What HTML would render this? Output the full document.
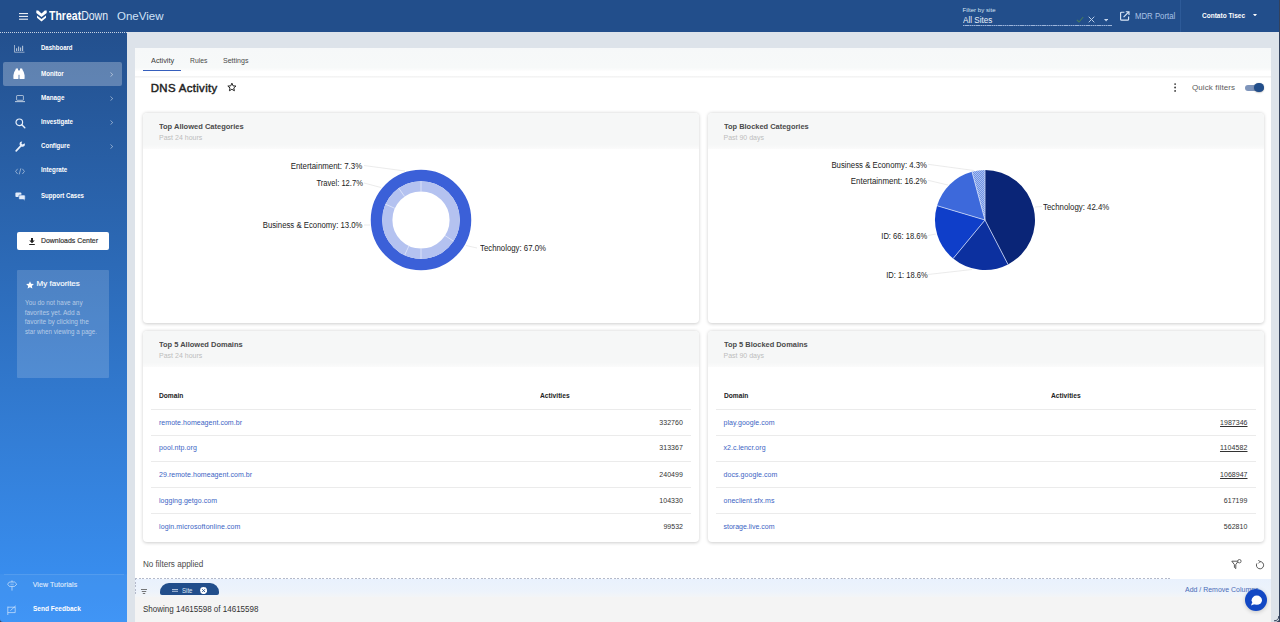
<!DOCTYPE html>
<html><head><meta charset="utf-8">
<style>
*{box-sizing:border-box;margin:0;padding:0}
html,body{width:1280px;height:622px;overflow:hidden}
body{font-family:"Liberation Sans",sans-serif;background:#dde3ea;position:relative;color:#333}
.abs{position:absolute}
.t{position:absolute;white-space:nowrap;line-height:1}
#hdr{position:absolute;left:0;top:0;width:1280px;height:32px;background:#224e8b}
#side{position:absolute;left:0;top:32px;width:127px;height:590px;background:linear-gradient(180deg,#23508e 0%,#3a92f6 100%)}
#main{position:absolute;left:135px;top:48px;width:1136.4px;height:574px;background:#fff}
.nav{position:absolute;left:40.7px;margin-top:-.5px;font-size:7px;font-weight:bold;color:#fff;line-height:1;white-space:nowrap}
.card{position:absolute;background:#fff;border-radius:4px;box-shadow:0 .5px 3.5px rgba(0,0,0,.2)}
.card .ch{position:absolute;left:0;top:0;right:0;height:36px;background:linear-gradient(180deg,#f6f7f7 0%,#f6f7f7 88%,#fbfbfb 100%);border-radius:4px 4px 0 0}
.card .ct{color:#505050;position:absolute;left:16px;top:9.7px;font-size:8px;font-weight:bold;color:#4a4a4a;line-height:1;white-space:nowrap}
.card .cs{position:absolute;left:16px;top:21.3px;font-size:7px;color:#bdbdbd;line-height:1;white-space:nowrap}
.lbl{position:absolute;margin-top:.5px;font-size:8.3px;color:#222;line-height:1;white-space:nowrap}
.th{position:absolute;font-size:7px;font-weight:bold;color:#222;line-height:1;white-space:nowrap}
.hl{position:absolute;left:8px;right:8px;height:1px;background:#ebebeb}
.dm{position:absolute;left:16px;font-size:7px;color:#3b63c4;line-height:1;white-space:nowrap}
.nm{position:absolute;right:16px;font-size:7px;color:#333;line-height:1;white-space:nowrap}
.u{text-decoration:underline}
</style></head><body>
<div id="hdr">
<svg class="abs" style="left:19px;top:12.8px" width="9.4" height="7" viewBox="0 0 9.4 7"><path d="M0 .6h9.2M0 3.4h9.2M0 6.2h9.2" stroke="#fff" stroke-width="1" fill="none"></path></svg>
<svg class="abs" style="left:36px;top:10px" width="11" height="12" viewBox="0 0 11 12"><path d="M0.3 0.6 L2.2 0.6 L5.5 3.6 L8.8 0.6 L10.7 0.6 L10.7 3 L5.5 7 L0.3 3 Z" fill="#fff"></path><path d="M1 5.6 L5.5 9 L10 5.6 L10 7.8 L5.5 11.6 L1 7.8 Z" fill="#fff"></path></svg>
<div class="t" style="left: 49px; top: 10px; font-size: 12px; color: rgb(255, 255, 255); transform: scaleX(0.876); transform-origin: left center;"><b>Threat</b><span style="color:#e6eef9">Down</span></div>
<div class="t" style="left: 117px; top: 11px; font-size: 11.5px; color: rgb(207, 225, 247); letter-spacing: 0px;">OneView</div>
<div class="t" style="left: 962.5px; top: 6.8px; font-size: 6px; color: rgb(215, 228, 245); letter-spacing: 0.05px;">Filter by site</div>
<div class="t" style="left: 962.5px; top: 15.5px; font-size: 8.5px; color: rgb(233, 240, 250); transform: scaleX(0.954); transform-origin: left center;">All Sites</div>
<div class="abs" style="left:963px;top:25px;width:149px;height:1px;background:repeating-linear-gradient(90deg,#9db5da 0,#9db5da 1.4px,#5f82b8 1.4px,#5f82b8 2.2px)"></div>
<svg class="abs" style="left:1076px;top:16px" width="8" height="7" viewBox="0 0 8 7"><path d="M.8 3.8 L3 6 L7.2 1" stroke="#457a5e" stroke-width="1.1" fill="none"></path></svg>
<svg class="abs" style="left:1088px;top:16px" width="7" height="7" viewBox="0 0 7 7"><path d="M.7 .7L6.3 6.3M6.3 .7L.7 6.3" stroke="#b7cbe8" stroke-width="1" fill="none"></path></svg>
<svg class="abs" style="left:1104.2px;top:19.2px" width="4.2" height="2.5" viewBox="0 0 5 3"><path d="M0 0H5L2.5 3Z" fill="#c7d7ee"></path></svg>
<svg class="abs" style="left:1120px;top:11.4px" width="9.6" height="9.8" viewBox="0 0 9.6 9.8"><path d="M4.4 1.2H1.6Q.6 1.2 .6 2.2V8.2Q.6 9.2 1.6 9.2H7.6Q8.6 9.2 8.6 8.2V5.4" stroke="#dbe7f7" stroke-width="1.15" fill="none"></path><path d="M5.8 .7H9V3.9M8.8 .9L3.6 6.1" stroke="#dbe7f7" stroke-width="1.15" fill="none"></path></svg>
<div class="t" style="left: 1134.5px; top: 11.5px; font-size: 8.5px; color: rgb(169, 195, 230); transform: scaleX(0.917); transform-origin: left center;">MDR Portal</div>
<div class="abs" style="left:1180px;top:0;width:1px;height:32px;background:#2d5a98"></div>
<div class="t" style="left: 1201.5px; top: 11.7px; font-size: 7px; font-weight: bold; color: rgb(255, 255, 255); transform: scaleX(0.932); transform-origin: left center;">Contato Tisec</div>
<svg class="abs" style="left:1252.8px;top:13.8px" width="4" height="2.4" viewBox="0 0 5 3"><path d="M0 0H5L2.5 3Z" fill="#fff"></path></svg>
</div>
<div id="side">
<div class="abs" style="left:0;top:0;width:127px;height:1px;border-top:1px dotted rgba(255,255,255,.75)"></div>
<div class="abs" style="left:3px;top:30px;width:119px;height:24px;background:rgba(255,255,255,.27);border-radius:2px"></div>
<div class="nav" style="top: 12.5px; transform: scaleX(0.862); transform-origin: left center;">Dashboard</div>
<div class="nav" style="top: 38.5px; transform: scaleX(0.888); transform-origin: left center;">Monitor</div>
<div class="nav" style="top: 62.5px; transform: scaleX(0.898); transform-origin: left center;">Manage</div>
<div class="nav" style="top: 86.5px; transform: scaleX(0.875); transform-origin: left center;">Investigate</div>
<div class="nav" style="top: 110.5px; transform: scaleX(0.871); transform-origin: left center;">Configure</div>
<div class="nav" style="top: 134.5px; transform: scaleX(0.89); transform-origin: left center;">Integrate</div>
<div class="nav" style="top: 160.5px; transform: scaleX(0.87); transform-origin: left center;">Support Cases</div>
<svg class="abs" style="left:110.3px;top:39.5px" width="3.4" height="5.1" viewBox="0 0 4 6"><path d="M.6 .6L3.2 3L.6 5.4" stroke="rgba(255,255,255,.55)" stroke-width="1" fill="none"></path></svg><svg class="abs" style="left:110.3px;top:63.5px" width="3.4" height="5.1" viewBox="0 0 4 6"><path d="M.6 .6L3.2 3L.6 5.4" stroke="rgba(255,255,255,.55)" stroke-width="1" fill="none"></path></svg><svg class="abs" style="left:110.3px;top:87.5px" width="3.4" height="5.1" viewBox="0 0 4 6"><path d="M.6 .6L3.2 3L.6 5.4" stroke="rgba(255,255,255,.55)" stroke-width="1" fill="none"></path></svg><svg class="abs" style="left:110.3px;top:111.5px" width="3.4" height="5.1" viewBox="0 0 4 6"><path d="M.6 .6L3.2 3L.6 5.4" stroke="rgba(255,255,255,.55)" stroke-width="1" fill="none"></path></svg>
<!-- icons -->
<svg class="abs" style="left:14px;top:12.5px" width="11" height="8" viewBox="0 0 11 8"><path d="M.5 0V7.2H10.5" stroke="rgba(255,255,255,.65)" stroke-width=".8" fill="none"></path><path d="M2.6 6V3.2M4.6 6V1.4M6.6 6V2.6M8.6 6V.8" stroke="rgba(255,255,255,.65)" stroke-width="1.1" fill="none"></path></svg>
<svg class="abs" style="left:13.4px;top:36.3px" width="12" height="11.4" viewBox="0 0 12 11.4"><path d="M2.9 .5H5V1.9L5.5 2.5V10.6Q5.5 11 5.1 11H.8Q.4 11 .4 10.6V7.2Q.8 3.8 2.4 1.9Z" fill="#fff"></path><path d="M9.1 .5H7V1.9L6.5 2.5V10.6Q6.5 11 6.9 11H11.2Q11.6 11 11.6 10.6V7.2Q11.2 3.8 9.6 1.9Z" fill="#fff"></path><rect x="5" y="2.6" width="2" height="4.2" fill="#fff"></rect></svg>
<svg class="abs" style="left:15px;top:63px" width="10" height="8" viewBox="0 0 10 8"><rect x="1.6" y=".5" width="6.8" height="4.8" rx=".6" stroke="rgba(255,255,255,.65)" stroke-width=".9" fill="none"></rect><path d="M0 6.6H10" stroke="rgba(255,255,255,.65)" stroke-width="1.1"></path></svg>
<svg class="abs" style="left:14.5px;top:85.5px" width="11" height="11" viewBox="0 0 11 11"><circle cx="4.3" cy="4.3" r="3.3" stroke="#e8f0fb" stroke-width="1.2" fill="none"></circle><path d="M6.8 6.8L9.8 9.8" stroke="#e8f0fb" stroke-width="1.4" stroke-linecap="round"></path></svg>
<svg class="abs" style="left:14.5px;top:109px" width="11" height="11" viewBox="0 0 11 11"><path d="M1.2 9.8L5.6 5.2" stroke="#e8f0fb" stroke-width="1.7" stroke-linecap="round"></path><path d="M9.6 2.2A2.6 2.6 0 1 1 7.2 .6L6.4 2.4L7.6 3.6Z" fill="#e8f0fb"></path></svg>
<svg class="abs" style="left:14.5px;top:135.5px" width="10" height="7" viewBox="0 0 10 7"><path d="M2.6 .8L.6 3.4L2.6 6M7.4 .8L9.4 3.4L7.4 6M5.8 .4L4.2 6.4" stroke="rgba(255,255,255,.6)" stroke-width=".8" fill="none"></path></svg>
<svg class="abs" style="left:14.5px;top:160px" width="11" height="9" viewBox="0 0 11 9"><rect x=".4" y=".4" width="6" height="4.6" rx="1" fill="#e3ecf9"></rect><rect x="3.8" y="3" width="6.4" height="4.6" rx="1" fill="#e3ecf9" stroke="#2a63b2" stroke-width=".6"></rect><path d="M8.4 7.4L9.6 8.6V7.2Z" fill="#e3ecf9"></path></svg>
<!-- downloads -->
<div class="abs" style="left:17px;top:200px;width:92px;height:18px;background:#fff;border-radius:2px"></div>
<svg class="abs" style="left:29px;top:205.5px" width="6" height="7" viewBox="0 0 6 7"><path d="M2 0H4V2.6H5.8L3 5.2L.2 2.6H2Z" fill="#222"></path><rect x=".2" y="6" width="5.6" height="1" fill="#222"></rect></svg>
<div class="t" style="left: 40.5px; top: 205px; font-size: 8px; color: rgb(51, 51, 51); -webkit-text-stroke: 0.2px rgb(51, 51, 51); transform: scaleX(0.866); transform-origin: left center;">Downloads Center</div>
<!-- favorites -->
<div class="abs" style="left:16.5px;top:238px;width:92px;height:108px;background:rgba(255,255,255,.16);border-radius:1px"></div>
<svg class="abs" style="left:25.5px;top:249px" width="8" height="8" viewBox="0 0 8 8"><path d="M4 .2L5.1 2.8L7.9 3L5.8 4.9L6.4 7.6L4 6.2L1.6 7.6L2.2 4.9L.1 3L2.9 2.8Z" fill="#fff"></path></svg>
<div class="t" style="left: 36.6px; top: 248px; font-size: 8px; color: rgb(255, 255, 255); -webkit-text-stroke: 0.15px rgb(255, 255, 255); letter-spacing: 0.01px;">My favorites</div>
<div class="t" style="left: 24.7px; top: 268px; font-size: 6.5px; color: rgba(255, 255, 255, 0.58); transform: scaleX(0.975); transform-origin: left center;">You do not have any</div>
<div class="t" style="left: 24.7px; top: 277.7px; font-size: 6.5px; color: rgba(255, 255, 255, 0.58); letter-spacing: 0px;">favorites yet. Add a</div>
<div class="t" style="left: 24.7px; top: 287px; font-size: 6.5px; color: rgba(255, 255, 255, 0.58); letter-spacing: 0.01px;">favorite by clicking the</div>
<div class="t" style="left: 24.7px; top: 296.6px; font-size: 6.5px; color: rgba(255, 255, 255, 0.58); transform: scaleX(0.958); transform-origin: left center;">star when viewing a page.</div>
<!-- bottom -->
<div class="abs" style="left:0;top:542px;width:127px;height:48px;background:rgba(255,255,255,.035)"></div><div class="abs" style="left:4px;top:542px;width:120px;height:1px;background:rgba(255,255,255,.1)"></div>
<svg class="abs" style="left:6.6px;top:548px" width="10.4" height="11" viewBox="0 0 10.4 11"><path d="M5 .4V2M5 6.4V10.6" stroke="rgba(255,255,255,.62)" stroke-width=".9"></path><path d="M2.4 2H7.6L9.8 4.2L7.6 6.4H2.4L.6 4.2Z" stroke="rgba(255,255,255,.62)" stroke-width=".9" fill="none" stroke-linejoin="round"></path><path d="M3.4 4.2H6.8" stroke="rgba(255,255,255,.5)" stroke-width=".8"></path></svg>
<div class="t" style="left: 32.7px; top: 548.6px; font-size: 7px; color: rgba(255, 255, 255, 0.78); -webkit-text-stroke: 0.2px rgba(255, 255, 255, 0.6); letter-spacing: 0.08px;">View Tutorials</div>
<svg class="abs" style="left:7px;top:572.5px" width="10" height="11" viewBox="0 0 10 11"><path d="M.8 1.6V10" stroke="rgba(255,255,255,.6)" stroke-width=".9"></path><path d="M.8 2.2H8.2V7.6H.8" stroke="rgba(255,255,255,.6)" stroke-width=".9" fill="none"></path><path d="M3.4 5.6L8.8 .8" stroke="rgba(255,255,255,.6)" stroke-width=".9"></path></svg>
<div class="t" style="left: 32.7px; top: 572.8px; font-size: 7px; font-weight: bold; color: rgb(255, 255, 255); transform: scaleX(0.931); transform-origin: left center;">Send Feedback</div>
</div>
<div id="main"><div style="position:absolute;left:1px;top:0;width:1133px;height:574px"><div class="abs" style="left:-1px;top:0;width:1136.4px;height:22.5px;background:linear-gradient(180deg,#f6f8f9 0%,#f7f9f9 85%,#fdfdfd 100%)"></div><div class="abs" style="left:-1px;top:28.3px;width:1136.4px;height:1.4px;background:linear-gradient(180deg,#f1f1f1,#fafafa)"></div><div class="t" style="left: 14.8px; top: 9px; font-size: 7.5px; color: rgb(60, 60, 60); transform: scaleX(0.976); transform-origin: left center;">Activity</div><div class="t" style="left: 53.8px; top: 9px; font-size: 7.5px; color: rgb(74, 74, 74); transform: scaleX(0.902); transform-origin: left center;">Rules</div><div class="t" style="left: 87px; top: 9px; font-size: 7.5px; color: rgb(74, 74, 74); transform: scaleX(0.937); transform-origin: left center;">Settings</div><div class="abs" style="left:7px;top:21.9px;width:38px;height:1.6px;background:#365fbd"></div><div class="t" style="left: 14.8px; top: 35.1px; font-size: 11.4px; color: rgb(34, 34, 34); -webkit-text-stroke: 0.45px rgb(34, 34, 34); letter-spacing: 0.34px;">DNS Activity</div><svg class="abs" style="left:90.7px;top:34px" width="9.8" height="9.8" viewBox="0 0 9.4 9"><path d="M4.7 .9L5.8 3.5L8.6 3.7L6.5 5.5L7.1 8.2L4.7 6.8L2.3 8.2L2.9 5.5L.8 3.7L3.6 3.5Z" stroke="#222" stroke-width=".95" fill="none" stroke-linejoin="round"></path></svg><svg class="abs" style="left:1037.9px;top:35px" width="2.2" height="9" viewBox="0 0 2.2 9"><circle cx="1.1" cy="1.1" r=".9" fill="#333"></circle><circle cx="1.1" cy="4.5" r=".9" fill="#333"></circle><circle cx="1.1" cy="7.9" r=".9" fill="#333"></circle></svg><div class="t" style="left: 1055.9px; top: 36.1px; font-size: 8px; color: rgb(92, 92, 92); letter-spacing: 0.12px;">Quick filters</div><div class="abs" style="left:1108.5px;top:36.7px;width:19px;height:6px;border-radius:3px;background:#7f95bb"></div><div class="abs" style="left:1118px;top:34.8px;width:9.6px;height:9.6px;border-radius:50%;background:#224e8b;box-shadow:0 .5px 1.5px rgba(0,0,0,.35)"></div><div class="card" style="left:7px;top:65px;width:556px;height:210px"><div class="ch"></div><div class="ct" style="transform: scaleX(0.939); transform-origin: left center;">Top Allowed Categories</div><div class="cs" style="letter-spacing: 0.01px;">Past 24 hours</div></div><div class="card" style="left:571.5px;top:65px;width:556px;height:210px"><div class="ch"></div><div class="ct" style="transform: scaleX(0.931); transform-origin: left center;">Top Blocked Categories</div><div class="cs" style="letter-spacing: 0px;">Past 90 days</div></div><div class="card" style="left:7px;top:283px;width:556px;height:211px"><div class="ch"></div><div class="ct" style="transform: scaleX(0.936); transform-origin: left center;">Top 5 Allowed Domains</div><div class="cs" style="letter-spacing: 0.01px;">Past 24 hours</div><div class="th" style="left: 16px; top: 60.8px; transform: scaleX(0.947); transform-origin: left center;">Domain</div><div class="th" style="left: 396.6px; top: 60.6px; transform: scaleX(0.951); transform-origin: left center;">Activities</div><div class="hl" style="top:77.5px"></div><div class="hl" style="top:103.80000000000001px"></div><div class="hl" style="top:129.8px"></div><div class="hl" style="top:155.8px"></div><div class="hl" style="top:181.79999999999995px"></div><div class="dm" style="top: 87.6px; letter-spacing: 0.04px;">remote.homeagent.com.br</div><div class="nm" style="top: 87.6px; letter-spacing: 0.07px;">332760</div><div class="dm" style="top: 113.4px; letter-spacing: 0.08px;">pool.ntp.org</div><div class="nm" style="top: 113.4px; letter-spacing: 0.07px;">313367</div><div class="dm" style="top: 139.7px; letter-spacing: 0.05px;">29.remote.homeagent.com.br</div><div class="nm" style="top: 139.7px; letter-spacing: 0.07px;">240499</div><div class="dm" style="top: 165.7px; letter-spacing: 0.05px;">logging.getgo.com</div><div class="nm" style="top: 165.7px; letter-spacing: 0.07px;">104330</div><div class="dm" style="top: 192.2px; letter-spacing: 0.1px;">login.microsoftonline.com</div><div class="nm" style="top: 192.2px; letter-spacing: 0.03px;">99532</div></div><div class="card" style="left:571.5px;top:283px;width:556px;height:211px"><div class="ch"></div><div class="ct" style="transform: scaleX(0.928); transform-origin: left center;">Top 5 Blocked Domains</div><div class="cs" style="letter-spacing: 0px;">Past 90 days</div><div class="th" style="left: 16px; top: 60.8px; transform: scaleX(0.947); transform-origin: left center;">Domain</div><div class="th" style="left: 343px; top: 60.6px; transform: scaleX(0.951); transform-origin: left center;">Activities</div><div class="hl" style="top:77.5px"></div><div class="hl" style="top:103.80000000000001px"></div><div class="hl" style="top:129.8px"></div><div class="hl" style="top:155.8px"></div><div class="hl" style="top:181.79999999999995px"></div><div class="dm" style="top: 87.6px; letter-spacing: 0.04px;">play.google.com</div><div class="nm u" style="top: 87.6px; letter-spacing: 0.03px;">1987346</div><div class="dm" style="top: 113.4px; letter-spacing: 0.03px;">x2.c.lencr.org</div><div class="nm u" style="top: 113.4px; letter-spacing: 0.11px;">1104582</div><div class="dm" style="top: 139.7px; letter-spacing: 0.07px;">docs.google.com</div><div class="nm u" style="top: 139.7px; letter-spacing: 0.03px;">1068947</div><div class="dm" style="top: 165.7px; letter-spacing: 0.05px;">oneclient.sfx.ms</div><div class="nm" style="top: 165.7px; letter-spacing: 0.07px;">617199</div><div class="dm" style="top: 192.2px; letter-spacing: 0px;">storage.live.com</div><div class="nm" style="top: 192.2px; letter-spacing: 0.07px;">562810</div></div><svg class="abs" style="left:0;top:0" width="1133" height="574" viewBox="0 0 1133 574"><path d="M228 117.5L269 123" stroke="#e3e3e3" stroke-width=".7" fill="none"></path><path d="M228 135L245 139.5" stroke="#e3e3e3" stroke-width=".7" fill="none"></path><path d="M228 177L234 177" stroke="#e3e3e3" stroke-width=".7" fill="none"></path><path d="M330 197.5L341 200" stroke="#e3e3e3" stroke-width=".7" fill="none"></path><circle cx="285" cy="172" r="44.5" stroke="#3b60d8" stroke-width="11.5" fill="none"></circle><circle cx="285" cy="172" r="33.7" stroke="#b4c2f0" stroke-width="10.2" fill="none"></circle><path d="M285.00 143.40L285.00 133.20" stroke="#e9eefc" stroke-width=".7"></path><path d="M308.99 187.58L317.54 193.13" stroke="#e9eefc" stroke-width=".7"></path><path d="M285.00 200.60L285.00 210.80" stroke="#e9eefc" stroke-width=".7"></path><path d="M272.91 197.92L268.60 207.16" stroke="#e9eefc" stroke-width=".7"></path><path d="M258.87 160.37L249.55 156.22" stroke="#e9eefc" stroke-width=".7"></path><path d="M268.60 148.57L262.75 140.22" stroke="#e9eefc" stroke-width=".7"></path><path d="M792 116.3L838 122.5" stroke="#e3e3e3" stroke-width=".7" fill="none"></path><path d="M792 132.3L812 137" stroke="#e3e3e3" stroke-width=".7" fill="none"></path><path d="M792 187.5L800 186" stroke="#e3e3e3" stroke-width=".7" fill="none"></path><path d="M792 226.5L836 221.5" stroke="#e3e3e3" stroke-width=".7" fill="none"></path><path d="M899 159L906 158.5" stroke="#e3e3e3" stroke-width=".7" fill="none"></path><defs><pattern id="dots" width="2" height="2" patternUnits="userSpaceOnUse"><rect width="2" height="2" fill="#6f92e4"></rect><rect width="1" height="1" fill="#a9c0f2"></rect><rect x="1" y="1" width="1" height="1" fill="#a9c0f2"></rect></pattern></defs><path d="M849 172L849.00 122.00A50 50 0 0 1 872.01 216.39Z" fill="#0a2577"></path><path d="M849 172L872.01 216.39A50 50 0 0 1 817.13 210.53Z" fill="#0c309f"></path><path d="M849 172L817.13 210.53A50 50 0 0 1 801.08 157.72Z" fill="#0f3ec9"></path><path d="M849 172L801.08 157.72A50 50 0 0 1 835.97 123.73Z" fill="#3d69db"></path><path d="M849 172L835.97 123.73A50 50 0 0 1 849.00 122.00Z" fill="url(#dots)"></path><path d="M849 172L849.00 122.00" stroke="#cdd9f8" stroke-width=".8"></path><path d="M849 172L872.01 216.39" stroke="#cdd9f8" stroke-width=".8"></path><path d="M849 172L817.13 210.53" stroke="#cdd9f8" stroke-width=".8"></path><path d="M849 172L801.08 157.72" stroke="#cdd9f8" stroke-width=".8"></path><path d="M849 172L835.97 123.73" stroke="#cdd9f8" stroke-width=".8"></path></svg><div class="lbl" style="right: 906.4px; top: 113.2px; transform: scaleX(0.951); transform-origin: right center;">Entertainment: 7.3%</div><div class="lbl" style="right: 906.4px; top: 130.5px; transform: scaleX(0.914); transform-origin: right center;">Travel: 12.7%</div><div class="lbl" style="right: 906.4px; top: 172.7px; transform: scaleX(0.937); transform-origin: right center;">Business &amp; Economy: 13.0%</div><div class="lbl" style="left: 343.5px; top: 195.2px; transform: scaleX(0.941); transform-origin: left center;">Technology: 67.0%</div><div class="lbl" style="right: 341.8px; top: 112px; transform: scaleX(0.937); transform-origin: right center;">Business &amp; Economy: 4.3%</div><div class="lbl" style="right: 341.8px; top: 128px; transform: scaleX(0.952); transform-origin: right center;">Entertainment: 16.2%</div><div class="lbl" style="right: 341.8px; top: 183.2px; transform: scaleX(0.915); transform-origin: right center;">ID: 66: 18.6%</div><div class="lbl" style="right: 341.8px; top: 222.2px; transform: scaleX(0.909); transform-origin: right center;">ID: 1: 18.6%</div><div class="lbl" style="left: 907.3px; top: 154px; transform: scaleX(0.945); transform-origin: left center;">Technology: 42.4%</div><div class="t" style="left: 6.9px; top: 511.5px; font-size: 8.5px; color: rgb(74, 74, 74); transform: scaleX(0.951); transform-origin: left center;">No filters applied</div><svg class="abs" style="left:1094.5px;top:511px" width="11" height="11" viewBox="0 0 11 11"><path d="M.8 2.2H7.2L4.8 5.6V9.6L3.4 8.4V5.6Z" stroke="#444" stroke-width=".9" fill="none" stroke-linejoin="round"></path><circle cx="8.4" cy="2.2" r="1.7" stroke="#444" stroke-width=".8" fill="#fff"></circle></svg><svg class="abs" style="left:1118.5px;top:511.5px" width="10" height="10" viewBox="0 0 10 10"><path d="M5 1.6A3.6 3.6 0 1 1 1.9 3.4" stroke="#444" stroke-width=".9" fill="none"></path><path d="M3.2 .2L5.2 1.6L3.4 3.2" stroke="#444" stroke-width=".8" fill="none"></path></svg><div class="abs" style="left:-1px;top:531px;width:1136.4px;height:18px;background:linear-gradient(180deg,#e9f1fd 0%,#edf3fb 70%,#f3f5f7 100%)"></div><div class="abs" style="left:-1px;top:549px;width:1136.4px;height:25px;background:#f4f4f4"></div><div class="abs" style="left:-1px;top:530.2px;width:1036px;height:1px;background:repeating-linear-gradient(90deg,#b4bacb 0,#b4bacb 2px,transparent 2px,transparent 3.6px)"></div><div class="abs" style="left:-1px;top:530.2px;width:1px;height:17px;background:repeating-linear-gradient(180deg,#b4bacb 0,#b4bacb 2px,transparent 2px,transparent 3.6px)"></div><svg class="abs" style="left:5.2px;top:540.6px" width="6" height="5" viewBox="0 0 6 5"><path d="M0 .5H6M.8 2.5H5.2M1.8 4.5H4.2" stroke="#555" stroke-width=".8"></path></svg><div class="abs" style="left:24px;top:535.3px;width:59.4px;height:12px;overflow:hidden;border-radius:0 0 2px 2px"><div style="width:59.4px;height:20px;border-radius:9px;background:#224e8b"></div></div><svg class="abs" style="left:36px;top:540.6px" width="6" height="3" viewBox="0 0 6 3"><path d="M0 .5H6M0 2.3H6" stroke="#cfdcf0" stroke-width=".8"></path></svg><div class="t" style="left: 46px; top: 539px; font-size: 7px; color: rgb(223, 232, 246); transform: scaleX(0.87); transform-origin: left center;">Site</div><svg class="abs" style="left:63.6px;top:539.3px" width="7.2" height="7.2" viewBox="0 0 7.2 7.2"><circle cx="3.6" cy="3.6" r="3.5" fill="#fff"></circle><path d="M2.2 2.2L5 5M5 2.2L2.2 5" stroke="#224e8b" stroke-width=".9"></path></svg><div class="t" style="left: 1048.7px; top: 537.3px; margin-top: 0.7px; font-size: 7.5px; color: rgb(74, 107, 184); transform: scaleX(0.929); transform-origin: left center;">Add / Remove Columns</div><div class="t" style="left: 6.9px; top: 556.8px; font-size: 8.5px; color: rgb(51, 51, 51); transform: scaleX(0.943); transform-origin: left center;">Showing 14615598 of 14615598</div></div></div><div class="abs" style="left:1245.3px;top:589.3px;width:22px;height:22px;border-radius:50%;background:#1348c4;box-shadow:0 1px 4px rgba(0,0,0,.2)"></div><svg class="abs" style="left:1250px;top:594.5px" width="13" height="12" viewBox="0 0 13 12"><ellipse cx="6.8" cy="5.2" rx="5.2" ry="4.6" fill="#fff"></ellipse><path d="M2.2 7.2L1 10.6L5 9Z" fill="#fff"></path></svg><div class="abs" style="left:1278.8px;top:0;width:1.2px;height:622px;background:#34425c"></div>
<svg class="abs" style="left:1274px;top:616px" width="6" height="6" viewBox="0 0 6 6"><path d="M6 0V6H0Q6 6 6 0Z" fill="#34425c"></path><path d="M4.8 0Q4.8 4.8 0 4.8" stroke="#34425c" stroke-width="1" fill="none"></path></svg><svg class="abs" style="left:0;top:619px" width="3" height="3" viewBox="0 0 5 5"><path d="M0 0V5H5Q0 5 0 0Z" fill="#34425c"></path></svg>

</body></html>
